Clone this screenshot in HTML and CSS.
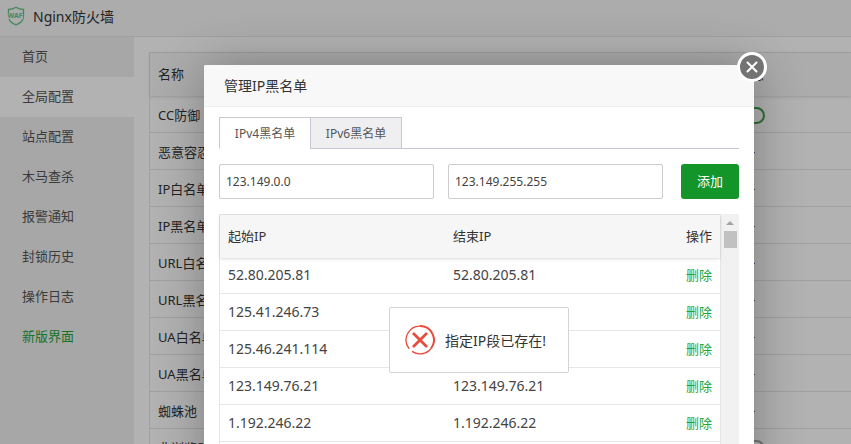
FILE: index.html
```html
<!DOCTYPE html>
<html lang="zh-CN">
<head>
  <meta charset="utf-8">
  <title>Nginx防火墙</title>
  <link rel="stylesheet" href="styles.css">
</head>
<body>
  <div class="page">
    <header class="topbar">
      <svg class="logo" viewBox="0 0 18 20" width="18" height="20">
        <path d="M9 1.2c2.200 1.500 4.800 2.200 7.500 2.300v6.500c0 4.200-3 7.300-7.500 8.900c-4.500-1.600-7.500-4.700-7.500-8.900v-6.500c2.700-.1 5.300-.8 7.500-2.300z" fill="none" stroke="#66c283" stroke-width="1.300"/>
        <rect x="0" y="7" width="16" height="6" fill="#f7f7f7"/>
        <text x="8" y="12" text-anchor="middle" class="logo-text">WAF</text>
      </svg>
      <h1>Nginx防火墙</h1>
    </header>

    <div class="content">
      <nav class="sidebar">
        <a href="#">首页</a>
        <a href="#" class="active">全局配置</a>
        <a href="#">站点配置</a>
        <a href="#">木马查杀</a>
        <a href="#">报警通知</a>
        <a href="#">封锁历史</a>
        <a href="#">操作日志</a>
        <a href="#" class="new">新版界面</a>
      </nav>

      <main class="main">
        <table class="table config-table">
          <colgroup>
            <col class="col-name">
            <col class="col-status">
            <col>
          </colgroup>
          <thead>
            <tr><th>名称</th><th class="center">状态</th><th></th></tr>
          </thead>
          <tbody>
            <tr><td>CC防御</td><td class="center"><input type="checkbox" class="switch" aria-label="CC防御" checked></td><td></td></tr>
            <tr><td>恶意容忍度</td><td class="center">--</td><td></td></tr>
            <tr><td>IP白名单</td><td class="center">--</td><td></td></tr>
            <tr><td>IP黑名单</td><td class="center">--</td><td></td></tr>
            <tr><td>URL白名单</td><td class="center">--</td><td></td></tr>
            <tr><td>URL黑名单</td><td class="center">--</td><td></td></tr>
            <tr><td>UA白名单</td><td class="center">--</td><td></td></tr>
            <tr><td>UA黑名单</td><td class="center">--</td><td></td></tr>
            <tr><td>蜘蛛池</td><td class="center">--</td><td></td></tr>
            <tr><td>非浏览器拦截</td><td class="center"><input type="checkbox" class="switch" aria-label="非浏览器拦截"></td><td></td></tr>
          </tbody>
        </table>
      </main>
    </div>
  </div>

  <div class="shade"></div>

  <div class="modal" role="dialog" aria-labelledby="modalTitle">
    <h2 class="modal-title" id="modalTitle">管理IP黑名单</h2>
    <button type="button" class="close" aria-label="关闭">
      <svg viewBox="0 0 12 12" width="12" height="12">
        <path d="M1.500 1.500l9 9M10.500 1.500l-9 9" stroke="#fff" stroke-width="2" stroke-linecap="round"/>
      </svg>
    </button>

    <div class="modal-body">
      <div class="tabs">
        <button type="button" class="tab on">IPv4黑名单</button>
        <button type="button" class="tab">IPv6黑名单</button>
      </div>

      <form class="add-form">
        <input type="text" name="start" aria-label="起始IP" value="123.149.0.0">
        <input type="text" name="end" aria-label="结束IP" value="123.149.255.255">
        <button type="button" class="btn-add">添加</button>
      </form>

      <div class="ip-box">
        <table class="table ip-table">
          <thead>
            <tr><th>起始IP</th><th>结束IP</th><th class="right">操作</th></tr>
          </thead>
          <tbody>
            <tr><td>52.80.205.81</td><td>52.80.205.81</td><td class="right"><a href="#">删除</a></td></tr>
            <tr><td>125.41.246.73</td><td>125.41.246.73</td><td class="right"><a href="#">删除</a></td></tr>
            <tr><td>125.46.241.114</td><td>125.46.241.114</td><td class="right"><a href="#">删除</a></td></tr>
            <tr><td>123.149.76.21</td><td>123.149.76.21</td><td class="right"><a href="#">删除</a></td></tr>
            <tr><td>1.192.246.22</td><td>1.192.246.22</td><td class="right"><a href="#">删除</a></td></tr>
            <tr><td></td><td></td><td></td></tr>
          </tbody>
        </table>
        <div class="scrollbar">
          <span class="arrow"></span>
          <span class="thumb"></span>
        </div>
      </div>
    </div>

    <div class="message" role="alert">
      <svg viewBox="0 0 30 30" width="30" height="30" fill="none" stroke="#e74c3c">
        <path d="M4.200 23.800A13.900 13.900 0 0 1 15 1.100" stroke-width="1.300"/>
        <path d="M15 1.100A13.900 13.900 0 0 1 26 23.500" stroke-width="2"/>
        <path d="M26 23.500A13.900 13.900 0 0 1 7 26.400" stroke-width="1.300"/>
        <path d="M8 8l14 14M22 8l-14 14" stroke-width="2.800"/>
      </svg>
      <span>指定IP段已存在!</span>
    </div>
  </div>
</body>
</html>
```

FILE: styles.css
```css
* {
  margin: 0;
  padding: 0;
  box-sizing: border-box;
}

html,
body {
  height: 100%;
}

body {
  position: relative;
  overflow: hidden;
  font-family: "Noto Sans", "Noto Sans CJK SC", sans-serif;
  font-size: 13px;
  color: #333;
  background: #fff;
}

button,
input {
  font-family: inherit;
}

a {
  color: #20a53a;
  text-decoration: none;
}

.page {
  display: flex;
  flex-direction: column;
  height: 100%;
}

/* Top bar */
.topbar {
  display: flex;
  align-items: center;
  gap: 8px;
  height: 37px;
  padding: 0 7px 4px;
  background: #f7f7f7;
  border-bottom: 1px solid #e6e6e6;
}

.topbar h1 {
  font-size: 14px;
  font-weight: 400;
}

.logo-text {
  font-size: 7px;
  font-weight: 700;
  fill: #66c283;
}

.content {
  display: flex;
  flex: 1;
  min-height: 0;
}

/* Left menu */
.sidebar {
  flex: 0 0 134px;
  background: #f0f0f1;
}

.sidebar a {
  display: block;
  height: 40px;
  padding-left: 22px;
  line-height: 38px;
  color: #555;
}

.sidebar a.active {
  background: #fff;
}

.sidebar a.new {
  color: #20a53a;
}

.main {
  flex: 1;
  min-width: 0;
  padding: 15px 0 0 15px;
  overflow: hidden;
}

/* Tables */
.table {
  width: 100%;
  table-layout: fixed;
  border-collapse: separate;
  border-spacing: 0;
  border-top: 1px solid #e6e6e6;
  border-left: 1px solid #e6e6e6;
}

.table th {
  height: 43px;
  padding: 0 8px 2px;
  font-weight: 400;
  text-align: left;
  background: #f6f6f6;
}

.table thead {
  position: relative;
  box-shadow: 0 1px 3px rgba(0, 0, 0, 0.15);
}

.table td {
  height: 37px;
  padding: 0 8px;
  white-space: nowrap;
  border-bottom: 1px solid #e6e6e6;
}

.table .center {
  text-align: center;
}

.table .right {
  text-align: right;
}

.col-name {
  width: 571px;
}

.col-status {
  width: 60px;
}

.switch {
  appearance: none;
  width: 28px;
  height: 17px;
  vertical-align: middle;
  border: 2px solid #aaa;
  border-radius: 9px;
}

.switch:checked {
  border-color: #43a047;
}

.shade {
  position: absolute;
  inset: 0;
  background: rgba(0, 0, 0, 0.3);
}

/* Dialog */
.modal {
  position: absolute;
  top: 65px;
  left: 204px;
  width: 550px;
  height: 547px;
  background: #fff;
  border-radius: 2px;
  box-shadow: 1px 1px 50px rgba(0, 0, 0, 0.3);
}

.modal-title {
  height: 42px;
  padding: 0 20px;
  font-size: 14px;
  font-weight: 400;
  line-height: 42px;
  background: #f8f8f8;
  border-bottom: 1px solid #eee;
  border-radius: 2px 2px 0 0;
}

.close {
  position: absolute;
  top: -13px;
  right: -13px;
  display: flex;
  align-items: center;
  justify-content: center;
  width: 30px;
  height: 30px;
  background: #737373;
  border: 3px solid #fff;
  border-radius: 50%;
}

.modal-body {
  padding: 10px 15px;
}

.tabs {
  display: flex;
  height: 32px;
  border-bottom: 1px solid #c8c8d2;
}

.tab {
  width: 92px;
  height: 32px;
  font-size: 12px;
  color: #555;
  background: #efeff1;
  border: 1px solid #c8c8d2;
}

.tab + .tab {
  margin-left: -1px;
}

.tab.on {
  background: #fff;
  border-bottom-color: #fff;
}

.add-form {
  display: flex;
  gap: 14px;
  margin: 15px 0;
}

.add-form input {
  flex: 1;
  min-width: 0;
  height: 35px;
  padding: 0 6px;
  font-size: 12px;
  color: #444;
  border: 1px solid #ccc;
  border-radius: 2px;
}

.btn-add {
  width: 58px;
  height: 35px;
  margin-left: 4px;
  padding-bottom: 2px;
  font-size: 13px;
  color: #fff;
  background: #13952a;
  border: 0;
  border-radius: 3px;
}

.ip-box {
  display: flex;
}

.ip-table {
  flex: 1;
  border-right: 1px solid #e6e6e6;
}

.ip-table td {
  padding-bottom: 2px;
  font-size: 14px;
  color: #444;
}

.ip-table td a {
  font-size: 13px;
}

.ip-table th:first-child {
  width: 225px;
}

.ip-table th:last-child {
  width: 80px;
}

.ip-table tbody tr:first-child td {
  height: 36px;
}

.scrollbar {
  display: flex;
  flex-direction: column;
  align-items: center;
  gap: 6px;
  width: 18px;
  padding-top: 7px;
  background: #f1f1f1;
}

.arrow {
  border: 4px solid transparent;
  border-top-width: 0;
  border-bottom-color: #a3a3a3;
}

.thumb {
  width: 13px;
  height: 17px;
  background: #c1c1c1;
}

/* Error tip over the dialog */
.message {
  position: absolute;
  top: 242px;
  left: 50%;
  display: flex;
  align-items: center;
  gap: 10px;
  width: 180px;
  height: 66px;
  padding: 0 15px;
  font-size: 14px;
  white-space: nowrap;
  background: #fff;
  border: 1px solid #d3d4d3;
  border-radius: 2px;
  transform: translateX(-50%);
}
```
